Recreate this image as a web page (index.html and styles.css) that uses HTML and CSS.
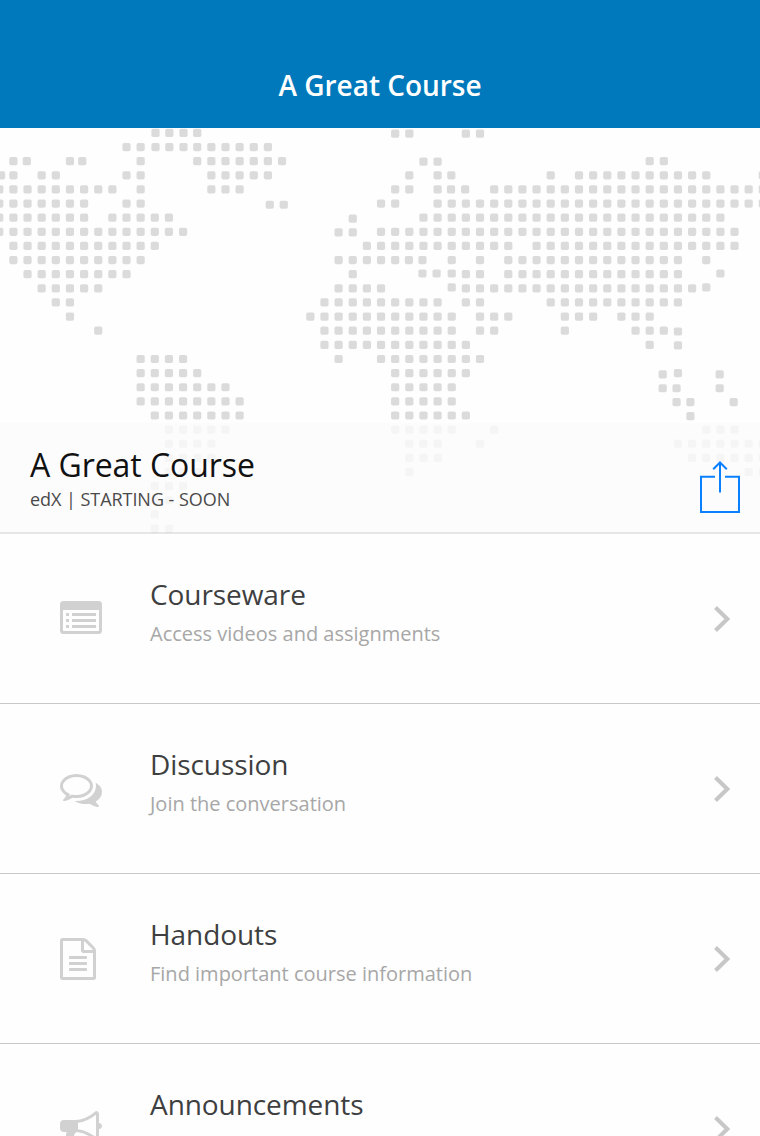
FILE: index.html
```html
<!DOCTYPE html>
<html lang="en">
<head>
<meta charset="utf-8">
<title>A Great Course</title>
<link rel="stylesheet" href="styles.css">
</head>
<body>
<header class="navbar"><h1 class="navbar-title">A Great Course</h1></header>
<section class="hero">
  <svg class="hero-map" viewBox="0 128 760 406" aria-hidden="true"></svg>
  <div class="hero-info">
    <div class="hero-text">
      <h2 class="course-name">A Great Course</h2>
      <p class="course-meta">edX | STARTING - SOON</p>
    </div>
    <svg class="share" viewBox="0 0 40 53" aria-label="Share"><path d="M15 16.700H1v35.300h38V16.700H25M20 32.500V2.500M13.200 9.300L20 2.500L26.800 9.300"/></svg>
  </div>
</section>
<main class="menu">
  <a class="item">
    <svg class="icon" viewBox="0 0 42 42"><path fill-rule="evenodd" d="M3.500 4h35a3.500 3.500 0 0 1 3.500 3.500v26a3.500 3.500 0 0 1-3.500 3.500h-35a3.500 3.500 0 0 1-3.500-3.500v-26a3.500 3.500 0 0 1 3.500-3.500zM3 13v20.300q0 .7.7.7h34.600q.7 0 .7-.7v-20.300z"/><path d="M6 16h3v3h-3zM12 16h24v3h-24zM6 22h3v3h-3zM12 22h24v3h-24zM6 28h3v3h-3zM12 28h24v3h-24z"/></svg>
    <div class="item-text"><h3 class="item-title">Courseware</h3><p class="item-sub">Access videos and assignments</p></div>
    <svg class="chevron" viewBox="0 0 16 26"><path d="M1.500 1.500L13.300 13L1.500 24.500"/></svg>
  </a>
  <a class="item">
    <svg class="icon" viewBox="0 0 1792 1792"><path d="M704 384q-153 0-286 52t-211.500 141-78.500 191q0 82 53 158t149 132l97 56-35 84q34-20 62-39l44-31 53 10q78 14 153 14 153 0 286-52t211.500-141 78.500-191-78.500-191-211.500-141-286-52zm0-128q191 0 353.500 68.500t256.500 186.500 94 257-94 257-256.500 186.500-353.500 68.500q-86 0-176-16-124 88-278 128-36 9-86 16h-3q-11 0-20.500-8t-11.500-21q-1-3-1-6.500t.5-6.500 2-6l2.500-5 3.500-5.500 4-5 4.500-5 4-4.500q5-6 23-25t26-29.500 22.500-29 25-38.500 20.500-44q-124-72-195-177t-71-224q0-139 94-257t256.500-186.500 353.500-68.500zm822 1169q10 24 20.500 44t25 38.500 22.500 29 26 29.500 23 25q1 1 4 4.500t4.500 5 4 5 3.500 5.500l2.500 5 2 6 .5 6.500-1 6.500q-3 14-13 22t-22 7q-50-7-86-16-154-40-278-128-90 16-176 16-271 0-472-132 58 4 88 4 161 0 309-45t264-129q125-92 192-212t67-254q0-77-23-152 129 71 204 178t75 230q0 120-71 224.500t-195 176.500z"/></svg>
    <div class="item-text"><h3 class="item-title">Discussion</h3><p class="item-sub">Join the conversation</p></div>
    <svg class="chevron" viewBox="0 0 16 26"><path d="M1.500 1.500L13.300 13L1.500 24.500"/></svg>
  </a>
  <a class="item">
    <svg class="icon" viewBox="128 0 1792 1792"><path d="M1596 380q28 28 48 76t20 88v1152q0 40-28 68t-68 28h-1344q-40 0-68-28t-28-68v-1600q0-40 28-68t68-28h896q40 0 88 20t76 48zm-444-244v376h376q-10-29-22-41l-313-313q-12-12-41-22zm384 1528v-1024h-416q-40 0-68-28t-28-68v-416h-768v1536h1280zm-1024-864q0-14 9-23t23-9h704q14 0 23 9t9 23v64q0 14-9 23t-23 9h-704q-14 0-23-9t-9-23v-64zm736 224q14 0 23 9t9 23v64q0 14-9 23t-23 9h-704q-14 0-23-9t-9-23v-64q0-14 9-23t23-9h704zm0 256q14 0 23 9t9 23v64q0 14-9 23t-23 9h-704q-14 0-23-9t-9-23v-64q0-14 9-23t23-9h704z"/></svg>
    <div class="item-text"><h3 class="item-title">Handouts</h3><p class="item-sub">Find important course information</p></div>
    <svg class="chevron" viewBox="0 0 16 26"><path d="M1.500 1.500L13.300 13L1.500 24.500"/></svg>
  </a>
  <a class="item">
    <svg class="icon" viewBox="0 0 1792 1792"><path d="M1664 640q53 0 90.500 37.500t37.500 90.500-37.500 90.500-90.500 37.500v384q0 52-38 90t-90 38q-417-347-812-380-58 19-91 66t-31 100.500 40 92.500q-20 33-23 65.500t6 58 33.500 55 48 50 61.500 50.500q-29 58-111.500 83t-168.500 11.500-132-55.500q-7-23-29.500-87.500t-32-94.500-23-89-15-101 3.500-98.500 22-110.500h-122q-66 0-113-47t-47-113v-192q0-66 47-113t113-47h480q435 0 896-384 52 0 90 38t38 90v384zm-128 604v-954q-394 302-768 343v270q377 42 768 341z"/></svg>
    <div class="item-text"><h3 class="item-title">Announcements</h3><p class="item-sub">Keep up with the latest news</p></div>
    <svg class="chevron" viewBox="0 0 16 26"><path d="M1.500 1.500L13.300 13L1.500 24.500"/></svg>
  </a>
</main>
<script src="map.js"></script>
</body>
</html>
```
FILE: styles.css
```css
* { box-sizing: border-box; margin: 0; padding: 0; }
body {
  width: 760px;
  height: 1136px;
  overflow: hidden;
  background: #fefefe;
  font-family: "Open Sans", "Noto Sans", sans-serif;
}
.navbar {
  height: 128px;
  padding-top: 43px;
  background: #0079bc;
  color: #fff;
  text-align: center;
}
.navbar-title { font-size: 28px; line-height: 84px; font-weight: 600; letter-spacing: -.03px; }
.hero {
  position: relative;
  display: flex;
  flex-direction: column;
  justify-content: flex-end;
  height: 406px;
  border-bottom: 2px solid #e6e6e6;
  background: #fefefe;
}
.hero-map { position: absolute; inset: 0; width: 760px; height: 406px; }
.hero-map rect { fill: #dbdbdb; }
.hero-info {
  position: relative;
  display: flex;
  justify-content: space-between;
  height: 109px;
  padding: 21px 20px 0 30px;
  background: rgba(251, 251, 251, .8);
}
.course-name { font-size: 32px; line-height: 42px; font-weight: 400; letter-spacing: -.05px; color: #111; }
.course-meta { margin-top: 1px; font-size: 18px; line-height: 24px; letter-spacing: -.05px; color: #4a4a4a; }
.share {
  width: 40px;
  height: 53px;
  margin-top: 16px;
  fill: none;
  stroke: #0a7fff;
  stroke-width: 2;
}
.item {
  display: flex;
  height: 170px;
  padding: 0 30px 0 60px;
  border-bottom: 1px solid #c8c8c8;
}
.icon { flex: none; width: 42px; height: 42px; margin: 64px 48px 0 0; fill: #d2d1d2; }
.item:first-child .icon { margin-top: 63px; }
.item-text { flex: 1; padding-top: 41px; }
.item-title { font-size: 28px; line-height: 38px; font-weight: 400; letter-spacing: -.08px; color: #3e3f41; }
.item-sub { margin-top: 7px; font-size: 20px; line-height: 28px; color: #a7a7a7; }
.chevron {
  width: 16px;
  height: 26px;
  margin-top: 72px;
  fill: none;
  stroke: #c7c7c7;
  stroke-width: 4;
}
```
FILE: map.js
```js
// Each row lists occupied columns: a single column, "from-to",
// or "column@dy" for a dot nudged vertically.
const rows = [
  "11.05 12.03 13.03 14 28@.7 29@.7 33@.7 34@.7",
  "9 10 11.05 12.03 13.03 14-19",
  "1 1.95 5 5.87 10 14-20 30@.5 31@.5 46 47",
  "0.13 1 3 4 9 10 15-19 29 31 31.97 39 41-50 54",
  "0-8 10 15-17 28 29 31 31.95 32.95 35-54",
  "0-6 9 10 19.13@1.2 20.12@1.2 27 28 31-54",
  "0-6 8-12 25@.9 30-51",
  "0-13 24@.6 25@.6 27-52",
  "1-11 26-36 38-52",
  "1-10 24-28 28.97 29.93 32 34 36-48 50",
  "2-9 25 29.93@-.7 30.93@-.7 32@-.7 33 34 36-48 51@-.7",
  "3-7 24-27 32@-1 33-49 50@-1",
  "4 5 23-31 33 34 39-48",
  "5 22-32 34-36 40-42 44-46",
  "7 23-32 34 35 40 45-47 48@.8",
  "23-33 46 48@.5",
  "10-13 24 27-34",
  "10-14 28-33 46.92@1.3 48 50.95@1.3",
  "10-16 28-32 46.92@1 47.9@1 50.95@1",
  "10-17 28-32 47.9@.7 48.88@.7 51.94@.7",
  "11-17 28-33 48.88@.7",
  "12-16 28-32 35 50-52",
  "12-15 29-31 34 48-54",
  "12-15 29-31 49-54",
  "12-14 29 53 54",
  "11-13",
  "11 12",
  "11",
  "11 12"
];
const map = document.querySelector(".hero-map");
function dot(col, row, dy) {
  const x = -0.75 + 14.14 * col - 4.1;
  const y = 132.9 + 14.13 * row + dy - 4.1;
  return `<rect x="${x.toFixed(2)}" y="${y.toFixed(2)}" width="8.200" height="8.200" rx="1.800"/>`;
}
map.innerHTML = rows.map((line, r) => line.split(" ").map(token => {
  if (token.includes("@")) {
    const [c, dy] = token.split("@").map(Number);
    return dot(c, r, dy);
  }
  const [from, to = from] = token.split("-").map(Number);
  let out = "";
  for (let c = from; c <= to; c++) out += dot(c, r, 0);
  return out;
}).join("")).join("");
```
